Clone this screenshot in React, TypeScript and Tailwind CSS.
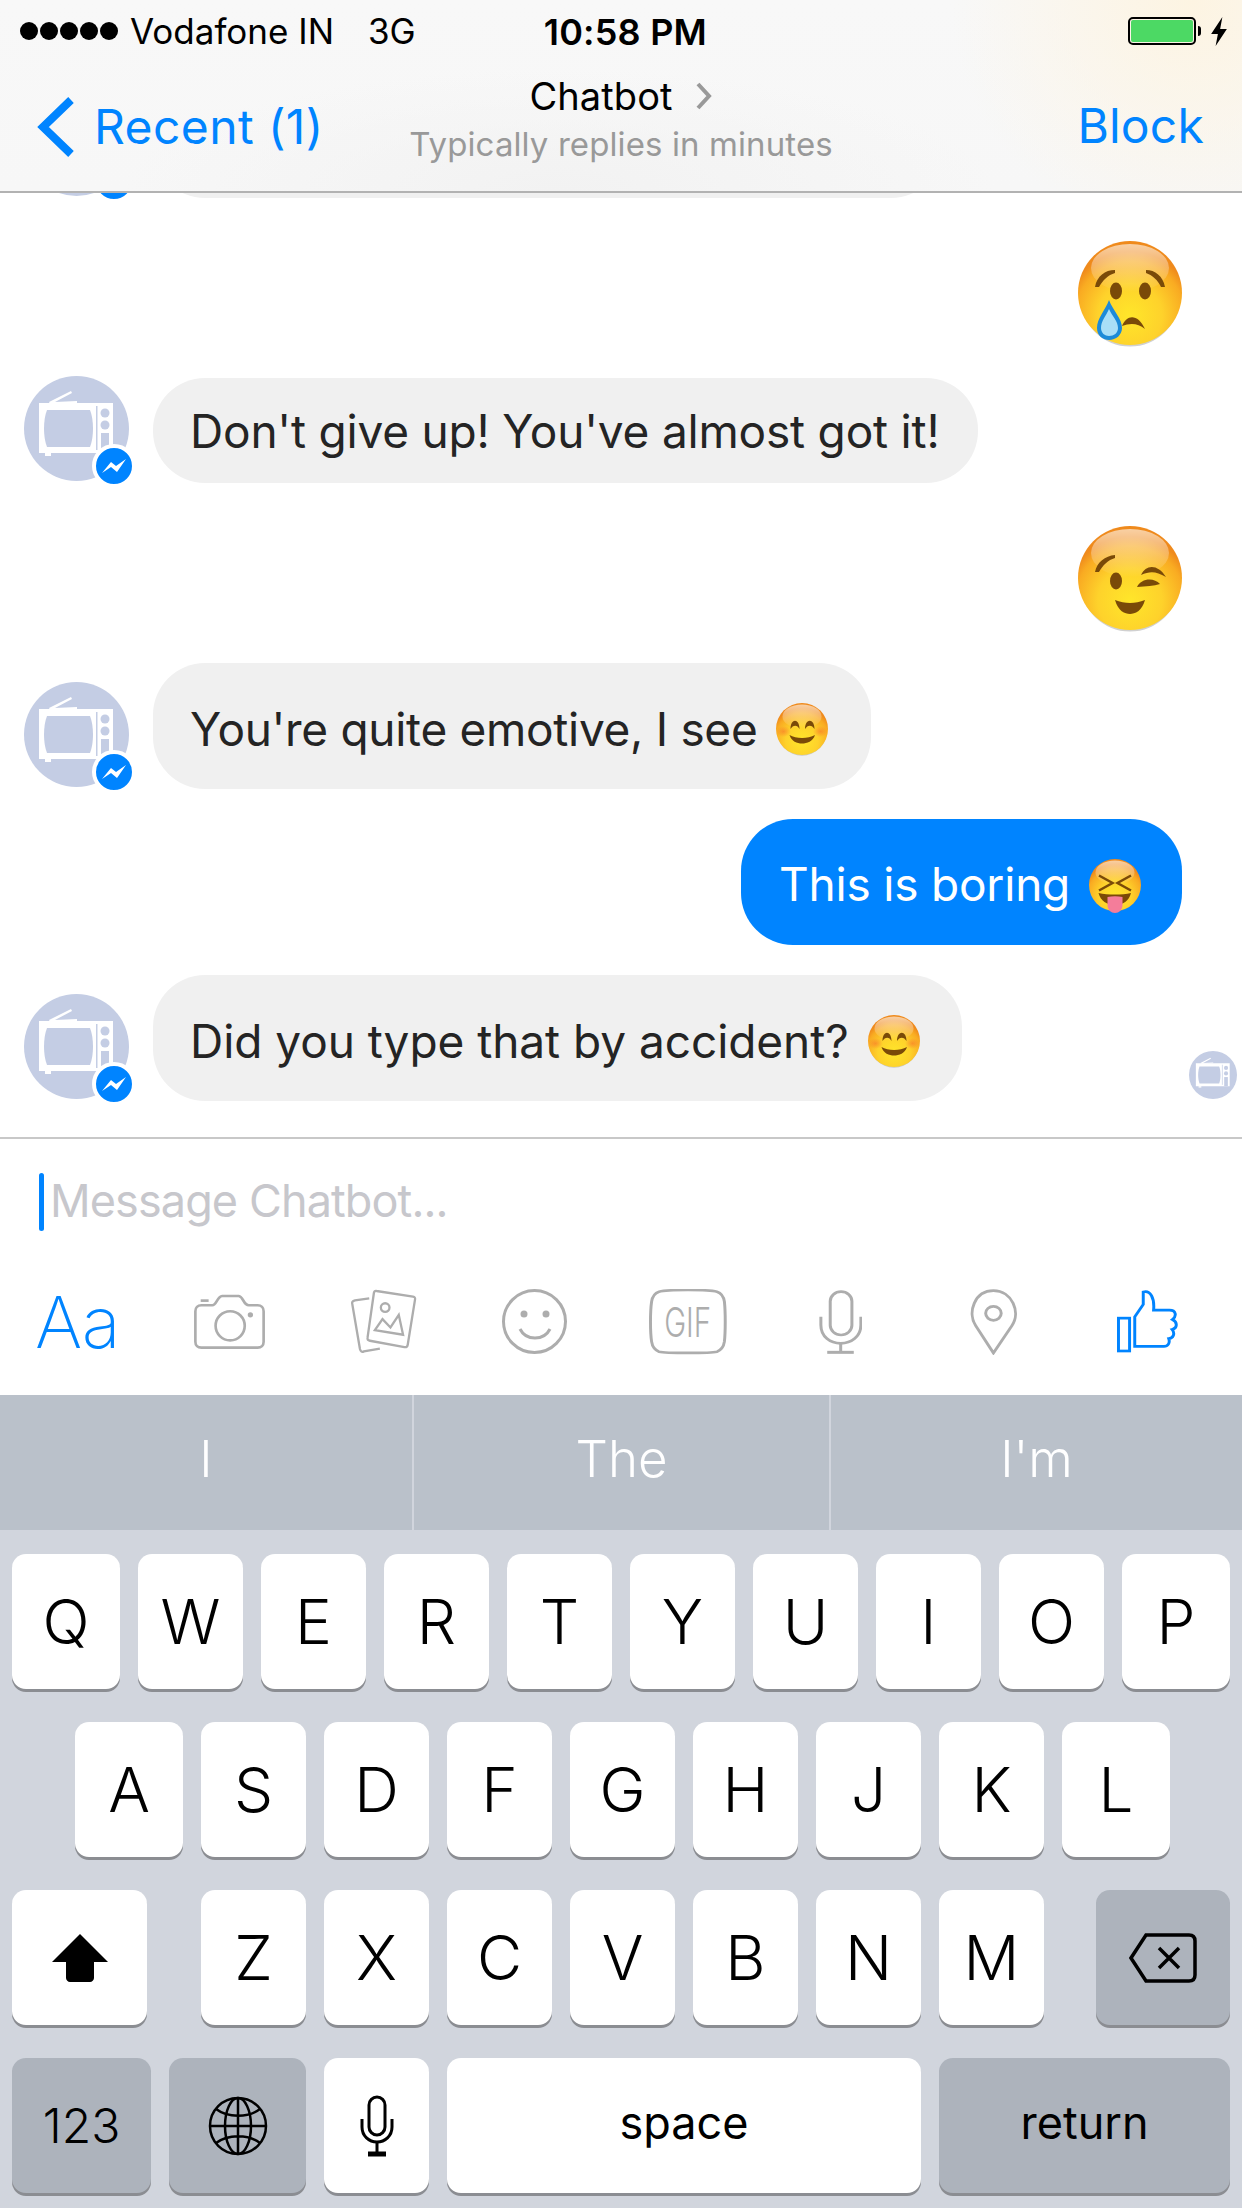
import React from "react";

const sans = "font-['Inter','Noto_Sans',sans-serif]";

function Face({ id, size, children }: { id: string; size: number; children?: React.ReactNode }) {
  return (
    <svg width={size} height={size} viewBox="0 0 104 104" className="shrink-0 overflow-visible">
      <defs>
        <radialGradient id={`${id}-base`} cx="50%" cy="72%" r="62%">
          <stop offset="0%" stopColor="#ffe62a" />
          <stop offset="50%" stopColor="#fed22b" />
          <stop offset="85%" stopColor="#f9ab22" />
          <stop offset="100%" stopColor="#ef8a1c" />
        </radialGradient>
        <linearGradient id={`${id}-shine`} x1="0" y1="0" x2="0" y2="1">
          <stop offset="0%" stopColor="#fff" stopOpacity="0.6" />
          <stop offset="100%" stopColor="#fff" stopOpacity="0" />
        </linearGradient>
        <radialGradient id={`${id}-cheek`}>
          <stop offset="0%" stopColor="#f8752a" stopOpacity="0.6" />
          <stop offset="100%" stopColor="#f8752a" stopOpacity="0" />
        </radialGradient>
      </defs>
      <ellipse cx="52" cy="55" rx="50" ry="50.5" fill="#8a8a8a" opacity="0.4" />
      <circle cx="52" cy="52" r="52" fill={`url(#${id}-base)`} />
      <ellipse cx="52" cy="27" rx="39" ry="24" fill={`url(#${id}-shine)`} />
      {children}
    </svg>
  );
}

const brown = "#7a4a08";

function CryFace() {
  return (
    <Face id="cry" size={104}>
      <path d="M17 46C19 35 27 29 37 29L37 32C30 34 25 39 21 46Z" fill={brown} />
      <path d="M68 29C77 29 85 35 87 46L83 46C80 39 74 34 68 32Z" fill={brown} />
      <ellipse cx="38" cy="50" rx="6" ry="8.5" fill={brown} />
      <ellipse cx="67" cy="50" rx="6" ry="8.5" fill={brown} />
      <path d="M44 85C49 73 60 73 67 88C60 82 52 82 44 85Z" fill={brown} />
      <path d="M31 59C27 70 19 77 19 87C19 95 25 99 31 99C38 99 44 94 44 87C44 77 35 70 31 59Z" fill="#1d8ad8" />
      <path d="M31 68C28 75 23 80 23 87C23 92 27 95 31 95C36 95 40 92 40 87C40 80 34 75 31 68Z" fill="#a9def7" />
    </Face>
  );
}

function WinkFace() {
  return (
    <Face id="wink" size={104}>
      <path d="M17 46C19 36 27 30 37 29L37 32C30 34 25 39 21 46Z" fill={brown} />
      <path d="M63 49C68 38 80 38 88 51C78 45 72 45 63 49Z" fill={brown} />
      <ellipse cx="38" cy="55" rx="6" ry="8.5" fill={brown} />
      <path d="M59 61C63 52 76 51 82 58C76 60 68 60 59 61Z" fill={brown} />
      <path d="M37 74C47 78 57 78 67 74C64 85 57 88 52 88C47 88 40 85 37 74Z" fill={brown} />
    </Face>
  );
}

function SmileFace({ id }: { id: string }) {
  return (
    <Face id={id} size={52}>
      <ellipse cx="15" cy="57" rx="15" ry="11" fill={`url(#${id}-cheek)`} />
      <ellipse cx="89" cy="57" rx="15" ry="11" fill={`url(#${id}-cheek)`} />
      <path d="M29 52C29 30 47 30 47 52C43 43 34 43 29 52Z" fill={brown} />
      <path d="M58 52C58 30 77 30 77 52C72 43 63 43 58 52Z" fill={brown} />
      <path d="M27 64C40 72 64 72 78 64C74 77 62 81 52 81C42 81 31 77 27 64Z" fill={brown} />
    </Face>
  );
}

function TongueFace() {
  return (
    <Face id="tongue" size={52}>
      <path d="M20 33L47 48L20 63" fill="none" stroke={brown} strokeWidth="5" />
      <path d="M84 33L57 48L84 63" fill="none" stroke={brown} strokeWidth="5" />
      <path d="M19 68C38 72 66 72 84 68C80 84 68 92 52 92C36 92 23 84 19 68Z" fill={brown} />
      <path d="M37 76C46 74 58 74 67 76V92C67 101 60 108 52 108C44 108 37 101 37 92Z" fill="#f47d9a" />
    </Face>
  );
}

function TvIcon() {
  return (
    <svg viewBox="0 0 105 105" className="block h-full w-full">
      <circle cx="52.5" cy="52.5" r="52.5" fill="#c4cde4" />
      <path d="M25 26L47 15L48 17L31 26L53 25V27L26 28Z" fill="#fff" />
      <path d="M15 27H89V77H15Z" fill="#fff" />
      <path d="M23 34H66C70 44 70 61 66 71H23C19 61 19 44 23 34Z" fill="#c4cde4" />
      <rect x="72" y="30" width="1.5" height="44" fill="#c4cde4" />
      <circle cx="81" cy="37" r="4.5" fill="#c4cde4" />
      <circle cx="81" cy="49" r="4.5" fill="#c4cde4" />
      <rect x="77" y="57" width="8" height="20" fill="#c4cde4" />
      <rect x="21" y="77" width="6" height="3" fill="#fff" />
    </svg>
  );
}

function Avatar() {
  return (
    <div className="relative mb-[2px] h-[105px] w-[105px] shrink-0">
      <TvIcon />
      <div className="absolute left-[68px] top-[68px] flex h-[44px] w-[44px] items-center justify-center rounded-full border-[4px] border-white bg-[#0084ff]">
        <svg width="26" height="18" viewBox="0 0 26 18">
          <path d="M1 16L10 5L15 9L25 2L16 15L10 10Z" fill="#fff" />
        </svg>
      </div>
    </div>
  );
}

function Bubble({ children, width }: { children: React.ReactNode; width: string }) {
  return (
    <div className={`flex h-[126px] items-center gap-[19px] rounded-[52px] bg-[#f0f0f0] pl-[37px] text-[46px] leading-none tracking-[-0.2px] text-[#242424] ${width}`}>
      {children}
    </div>
  );
}

function Key({ label, width = "w-[105px]", dark, children, textSize = "text-[62px] font-light" }: { label?: string; width?: string; dark?: boolean; children?: React.ReactNode; textSize?: string }) {
  return (
    <div
      className={`flex h-[135px] shrink-0 items-center justify-center rounded-[14px] font-['Inter',sans-serif] text-black shadow-[0_3px_0_#8b8d92] ${textSize} ${width} ${dark ? "bg-[#adb3bc]" : "bg-white"}`}
    >
      {label}
      {children}
    </div>
  );
}

// outer keys of the two full rows are a little wider
function Row({ letters, wideEnds }: { letters: string; wideEnds?: boolean }) {
  return (
    <>
      {letters.split("").map((c, i) => (
        <Key key={c} label={c} width={wideEnds && (i === 0 || i === letters.length - 1) ? "w-[108px]" : "w-[105px]"} />
      ))}
    </>
  );
}

const gray = "#adadad";
const blue = "#0084ff";

function Toolbar() {
  return (
    <div className="flex flex-1 items-start pl-[35px]">
      <span className={`${sans} mt-[27px] w-[82px] text-[72px] font-extralight leading-[72px] tracking-[-0.5px] text-[#0084ff]`}>Aa</span>
      <svg width="73" height="55" viewBox="521 56 218 166" className="ml-[76px] mt-[35px]" fill="none" stroke={gray} strokeWidth="8">
        <path d="M545 90H578C592 90 592 64 608 62H658C672 64 672 90 688 90H715C726 90 733 97 733 108V200C733 211 726 218 715 218H545C534 218 527 211 527 200V108C527 97 534 90 545 90Z" />
        <path d="M543 76H567" />
        <circle cx="632" cy="152" r="44" />
        <circle cx="693" cy="119" r="8" fill={gray} stroke="none" />
      </svg>
      <svg width="68" height="67" viewBox="990 42 205 200" className="ml-[84px] mt-[29px]" fill="none" stroke={gray} strokeWidth="7">
        <path d="M1048 72L1005 78C997 80 995 84 997 90L1020 225C1022 233 1026 235 1032 232L1080 224" />
        <path d="M1070 50L1180 67C1186 68 1187 70 1186 76L1164 212C1163 218 1160 220 1154 219L1050 200C1044 199 1042 196 1043 190L1062 56C1063 51 1065 49 1070 50Z" />
        <circle cx="1096" cy="100" r="13" />
        <path d="M1065 168L1088 135L1112 160L1137 122L1150 182Z" />
      </svg>
      <svg width="65" height="65" viewBox="0 0 65 65" className="ml-[84px] mt-[30px]" fill="none" stroke={gray} strokeWidth="3">
        <circle cx="32.5" cy="32.5" r="31" />
        <circle cx="22" cy="25" r="3.5" fill={gray} stroke="none" />
        <circle cx="44" cy="25" r="3.5" fill={gray} stroke="none" />
        <path d="M18 40C24 52 42 52 48 40" />
      </svg>
      <div className="ml-[82px] mt-[30px] grid h-[66px] w-[78px] place-items-center">
        <svg width="78" height="66" viewBox="55 42 210 198" preserveAspectRatio="none" className="[grid-area:1/1]" fill="none" stroke={gray} strokeWidth="8">
          <path d="M160 45C200 45 225 46 238 50C252 55 256 65 258 80C261 110 261 170 258 200C256 215 250 225 238 230C220 235 100 235 82 230C70 225 64 215 62 200C58 170 58 110 62 80C64 65 68 55 82 50C95 46 120 45 160 45Z" />
        </svg>
        <span className="scale-x-[0.72] text-[41px] font-light leading-none text-[#adadad] [grid-area:1/1]">GIF</span>
      </div>
      <svg width="43" height="65" viewBox="515 45 115 195" preserveAspectRatio="none" className="ml-[92px] mt-[31px]" fill="none" stroke={gray} strokeWidth="8">
        <rect x="545" y="50" width="58" height="130" rx="29" />
        <path d="M520 125V150C520 185 545 205 573 205C601 205 627 185 627 150V125" />
        <path d="M573 205V232" />
        <path d="M537 232H608" strokeWidth="9" />
      </svg>
      <svg width="50" height="66" viewBox="920 40 135 198" preserveAspectRatio="none" className="ml-[107px] mt-[30px]" fill="none" stroke={gray} strokeWidth="8">
        <path d="M986 232L938 150C915 110 935 45 986 45C1037 45 1060 110 1036 150Z" />
        <circle cx="986" cy="113" r="21" />
      </svg>
      <svg width="61" height="63" viewBox="1318 42 165 188" preserveAspectRatio="none" className="ml-[98px] mt-[31px]" fill="none" stroke={blue} strokeWidth="8">
        <rect x="1322" y="126" width="30" height="98" />
        <path d="M1366 210V122L1389 85V48C1408 42 1420 65 1417 102H1460C1478 102 1480 120 1468 130C1482 138 1482 155 1467 160C1476 172 1470 186 1458 187C1462 200 1456 210 1445 210Z" />
      </svg>
    </div>
  );
}

export default function App() {
  return (
    <div className={`${sans} mx-auto flex h-[2208px] w-[1242px] flex-col overflow-hidden bg-white`}>
      {/* nav */}
      <header className="relative z-10 h-[193px] shrink-0 border-b-2 border-[#b2b2b2] bg-[radial-gradient(circle_at_96%_0%,#fdf4e2_0%,transparent_20%),radial-gradient(ellipse_at_45%_100%,#f2f2f2_0%,transparent_45%),linear-gradient(#f8f8f8,#f7f7f7)]">
        <div className="flex h-[62px] items-center text-[35px] leading-none text-black">
          <div className="ml-[20px] flex gap-[2px]">
            {[0, 1, 2, 3, 4].map((i) => (
              <span key={i} className="h-[18px] w-[18px] rounded-full bg-black" />
            ))}
          </div>
          <span className="ml-[12px] w-[238px]">Vodafone IN</span>
          <span>3G</span>
          <span className="ml-[128px] mt-[2px] text-[36px] font-semibold tracking-[0.2px]">10:58 PM</span>
          <div className="ml-auto mr-[14px] flex items-center gap-[2px]">
            <div className="h-[28px] w-[68px] rounded-[5px] border-2 border-black p-[1px]">
              <div className="h-full w-full rounded-[2px] bg-[#4cd964]" />
            </div>
            <span className="h-[10px] w-[3px] rounded-r-full bg-black" />
            <svg width="18" height="29" viewBox="0 0 16 29" preserveAspectRatio="none" className="ml-[7px]">
              <path d="M11 0L1 17H7L5 29L15 12H9Z" fill="#000" />
            </svg>
          </div>
        </div>
        <div className="relative flex h-[129px] items-start">
          <div className="mt-[34px] ml-[36px] flex items-center text-[#0084ff]">
            <svg width="40" height="62" viewBox="0 0 40 62" fill="none" stroke="#0084ff" strokeWidth="8">
              <path d="M35 4L7 31L35 58" />
            </svg>
            <span className="ml-[18px] text-[48px] leading-none tracking-[0.4px]">Recent (1)</span>
          </div>
          <div className="absolute left-[390px] top-[9px] flex w-[462px] flex-col items-center">
            <div className="flex items-center gap-[22px] text-[38px] leading-[50px] tracking-[0.1px] text-black">
              Chatbot
              <svg width="18" height="28" viewBox="0 0 18 28" fill="none" stroke="#999" strokeWidth="4">
                <path d="M3 2L14 14L3 26" />
              </svg>
            </div>
            <span className="mt-[7px] text-[33px] leading-none tracking-[0.1px] text-[#999]">Typically replies in minutes</span>
          </div>
          <span className="ml-auto mr-[38px] mt-[40px] text-[48px] leading-none tracking-[0.2px] text-[#0084ff]">Block</span>
        </div>
      </header>

      {/* messages */}
      <main className="flex h-[944px] shrink-0 flex-col overflow-hidden">
        <div className="-mt-[102px] flex items-end gap-[24px] pl-[24px]">
          <Avatar />
          <div className="h-[105px] w-[790px] rounded-[52px] bg-[#f0f0f0]" />
        </div>
        <div className="mt-[43px] flex justify-end pr-[60px]">
          <CryFace />
        </div>
        <div className="mt-[31px] flex items-end gap-[24px] pl-[24px]">
          <Avatar />
          <div className="flex h-[105px] w-[825px] items-center rounded-[52px] bg-[#f0f0f0] pl-[37px] text-[46px] leading-none tracking-[-0.2px] text-[#242424]">
            Don't give up! You've almost got it!
          </div>
        </div>
        <div className="mt-[43px] flex justify-end pr-[60px]">
          <WinkFace />
        </div>
        <div className="mt-[33px] flex items-end gap-[24px] pl-[24px]">
          <Avatar />
          <Bubble width="w-[718px]">
            <span className="mt-[5px] tracking-[-0.3px]">You're quite emotive, I see</span>
            <span className="mt-[6px]">
              <SmileFace id="s1" />
            </span>
          </Bubble>
        </div>
        <div className="mt-[30px] flex justify-end pr-[60px]">
          <div className="flex h-[126px] w-[441px] items-center gap-[19px] rounded-[52px] bg-[#0084ff] pl-[38px] text-[46px] leading-none tracking-[-0.2px] text-white">
            <span className="mt-[4px]">This is boring</span>
            <span className="mt-[6px]">
              <TongueFace />
            </span>
          </div>
        </div>
        <div className="relative mt-[30px] flex items-end gap-[24px] pl-[24px]">
          <Avatar />
          <Bubble width="w-[809px]">
            <span className="mt-[5px] tracking-[-0.05px]">Did you type that by accident?</span>
            <span className="mt-[6px]">
              <SmileFace id="s2" />
            </span>
          </Bubble>
          <div className="absolute left-[1189px] top-[76px] h-[48px] w-[48px]">
            <TvIcon />
          </div>
        </div>
      </main>

      {/* composer */}
      <section className="flex h-[258px] shrink-0 flex-col border-t-2 border-[#c8c8c8] bg-white">
        <div className="flex h-[120px] items-center pl-[39px] pt-[6px]">
          <span className="h-[58px] w-[5px] rounded-full bg-[#0084ff]" />
          <span className="ml-[6px] -mt-[4px] text-[45px] leading-none tracking-[-0.9px] text-[#c7c7cc]">Message Chatbot...</span>
        </div>
        <Toolbar />
      </section>

      {/* keyboard */}
      <section className="flex flex-1 flex-col bg-[#d1d5dd]">
        <div className="flex h-[135px] bg-[#bac1ca] pb-[6px] text-[51px] font-light text-white">
          <div className="-mb-[6px] flex w-[414px] items-center justify-center border-r-2 border-[#d1d5dd] pb-[6px]">I</div>
          <div className="-mb-[6px] flex w-[417px] items-center justify-center border-r-2 border-[#d1d5dd] pb-[6px]">The</div>
          <div className="-mb-[6px] flex flex-1 items-center justify-center pb-[6px]">I'm</div>
        </div>
        <div className="mt-[24px] flex gap-[18px] pl-[12px]">
          <Row letters="QWERTYUIOP" wideEnds />
        </div>
        <div className="mt-[33px] flex gap-[18px] pl-[75px]">
          <Row letters="ASDFGHJKL" wideEnds />
        </div>
        <div className="mt-[33px] flex items-center gap-[18px] pl-[12px]">
          <Key width="w-[135px] mr-[36px]">
            <svg width="58" height="50" viewBox="0 0 58 50">
              <path d="M29 1L57 29H43V45C43 47 41 49 39 49H19C17 49 15 47 15 45V29H1Z" fill="#000" />
            </svg>
          </Key>
          <Row letters="ZXCVBNM" />
          <Key width="w-[134px] ml-[34px]" dark>
            <svg width="68" height="50" viewBox="0 0 68 50" fill="none" stroke="#000" strokeWidth="3.5">
              <path d="M17 2H60C64 2 66 4 66 8V42C66 46 64 48 60 48H17L2 25Z" />
              <path d="M30 15L50 35M50 15L30 35" />
            </svg>
          </Key>
        </div>
        <div className="mt-[33px] flex items-center gap-[18px] pl-[12px]">
          <Key label="123" width="w-[139px]" dark textSize="text-[48px] font-light" />
          <Key width="w-[137px]" dark>
            <svg width="60" height="60" viewBox="0 0 60 60" fill="none" stroke="#000" strokeWidth="2.5">
              <circle cx="30" cy="30" r="28" />
              <ellipse cx="30" cy="30" rx="13" ry="28" />
              <path d="M2 30H58M30 2V58M8 13C20 22 40 22 52 13M8 47C20 38 40 38 52 47" />
            </svg>
          </Key>
          <Key>
            <svg width="36" height="62" viewBox="0 0 36 62" fill="none" stroke="#000" strokeWidth="3">
              <rect x="10" y="2" width="16" height="38" rx="8" />
              <path d="M3 24V32C3 41 10 47 18 47C26 47 33 41 33 32V24" />
              <path d="M18 47V58" />
              <path d="M9 59H27" strokeWidth="5" />
            </svg>
          </Key>
          <Key width="w-[474px]" textSize="text-[45px]">
            <span className="-mt-[6px]">space</span>
          </Key>
          <Key width="w-[291px]" dark textSize="text-[45px]">
            <span className="-mt-[6px]">return</span>
          </Key>
        </div>
      </section>
    </div>
  );
}
